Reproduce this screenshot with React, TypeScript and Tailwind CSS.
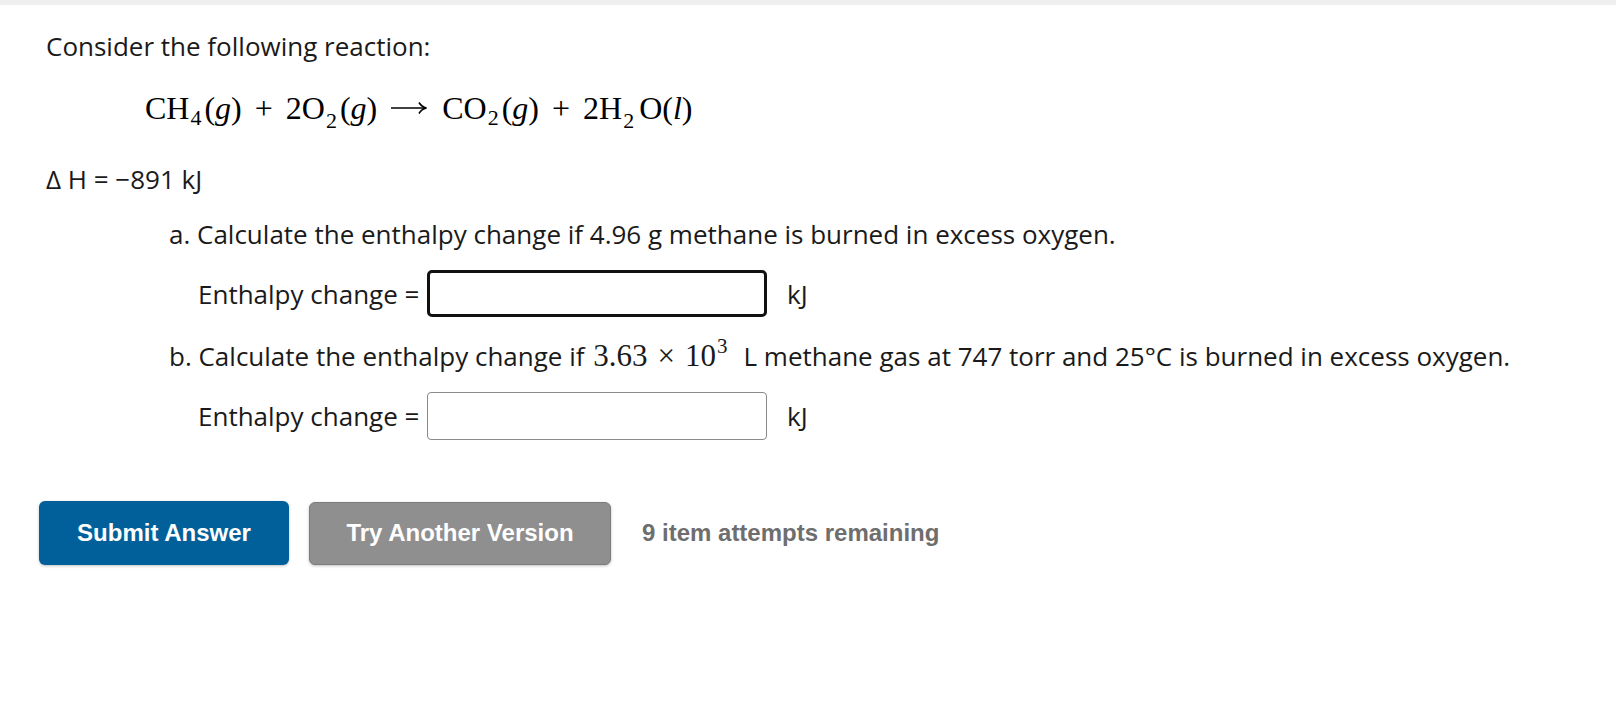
import React from 'react';

const body = { fontFamily: '"Open Sans", "Liberation Sans", sans-serif' };
const mathFont = { fontFamily: '"Liberation Serif", "DejaVu Serif", serif' };
const btnFont = { fontFamily: '"Liberation Sans", Arial, sans-serif' };

function Sub({ children, low, wide }: { children: React.ReactNode; low?: boolean; wide?: boolean }) {
  return (
    <span
      className={`relative ${low ? 'top-[9px]' : 'top-[6px]'} text-[22px] leading-none ${
        wide ? 'ml-[1px] mr-[5px]' : 'ml-[1px] mr-[3px]'
      }`}
    >
      {children}
    </span>
  );
}

function Op({ children }: { children: React.ReactNode }) {
  return <span className="mx-[13px]">{children}</span>;
}

function Arrow() {
  return (
    <svg width="38" height="16" viewBox="0 0 38 16" className="inline-block ml-[13px] mr-[14px] align-[3px]">
      <path d="M1 8 H36" stroke="#000" strokeWidth="1.6" fill="none" />
      <path d="M29 2.5 Q31.5 6.8 36.5 8 Q31.5 9.2 29 13.5" stroke="#000" strokeWidth="1.6" fill="none" />
    </svg>
  );
}

function Equation() {
  return (
    <div className="ml-[99px] mt-[24px] h-[40px] text-[32px] leading-[40px] text-black whitespace-nowrap" style={mathFont}>
      CH<Sub>4</Sub>(<i>g</i>)<Op>+</Op>2O<Sub low>2</Sub>(<i>g</i>)
      <Arrow />
      CO<Sub>2</Sub>(<i>g</i>)<Op>+</Op>2H<Sub low wide>2</Sub>O(<i>l</i>)
    </div>
  );
}

function AnswerRow({ focused, className }: { focused?: boolean; className: string }) {
  return (
    <div className={`flex items-center ${className}`}>
      <span className="ml-[152px] w-[229px] text-[26px] leading-[36px] text-[#1a1a1a] whitespace-nowrap">Enthalpy change =</span>
      <div
        className={
          focused
            ? 'w-[340px] h-[47px] rounded-[5px] border-[3px] border-[#111] bg-white'
            : 'w-[340px] h-[48px] rounded-[4px] border-[1.5px] border-[#8a8a8a] bg-white'
        }
      />
      <span className="ml-[20px] text-[26px] leading-[36px] text-[#1a1a1a]">kJ</span>
    </div>
  );
}

export default function App() {
  return (
    <div className="w-[1616px] h-[724px] bg-white overflow-hidden" style={body}>
      <div className="h-[5px] bg-[#efefef]" />
      <div className="pl-[46px]">
        <p className="mt-[23px] text-[26px] leading-[36px] text-[#1a1a1a]">Consider the following reaction:</p>

        <Equation />

        <p className="mt-[33px] text-[26px] leading-[36px] text-[#1a1a1a]">Δ H = −891 kJ</p>

        <p className="mt-[19px] ml-[123px] text-[26px] leading-[36px] text-[#1a1a1a] whitespace-nowrap">
          a. Calculate the enthalpy change if 4.96 g methane is burned in excess oxygen.
        </p>
        <AnswerRow focused className="mt-[18px] h-[47px]" />

        <p className="mt-[21px] ml-[123px] h-[36px] text-[26px] leading-[36px] text-[#1a1a1a] whitespace-nowrap">
          b. Calculate the enthalpy change if{' '}
          <span className="text-[31px] ml-[2px]" style={mathFont}>
            3.63<span className="mx-[10px]">×</span>10
            <sup className="relative -top-[13px] text-[21px] align-baseline ml-[1px]">3</sup>
          </span>
          <span className="ml-[16px]">L methane gas at 747 torr and 25°C is burned in excess oxygen.</span>
        </p>
        <AnswerRow className="mt-[18px] h-[48px]" />
      </div>

      <div className="flex items-center mt-[61px] pl-[39px]" style={btnFont}>
        <button className="w-[250px] h-[64px] rounded-[6px] bg-[#01609a] text-white text-[24px] font-bold shadow-[0_1px_3px_rgba(0,0,0,0.25)]">
          Submit Answer
        </button>
        <button className="ml-[20px] w-[302px] h-[63px] rounded-[6px] bg-[#8f8f8f] border border-[#7c7c7c] text-white text-[24px] font-bold shadow-[0_1px_3px_rgba(0,0,0,0.25)]">
          Try Another Version
        </button>
        <span className="ml-[31px] text-[24px] font-bold text-[#6e6e6e]">9 item attempts remaining</span>
      </div>
    </div>
  );
}
